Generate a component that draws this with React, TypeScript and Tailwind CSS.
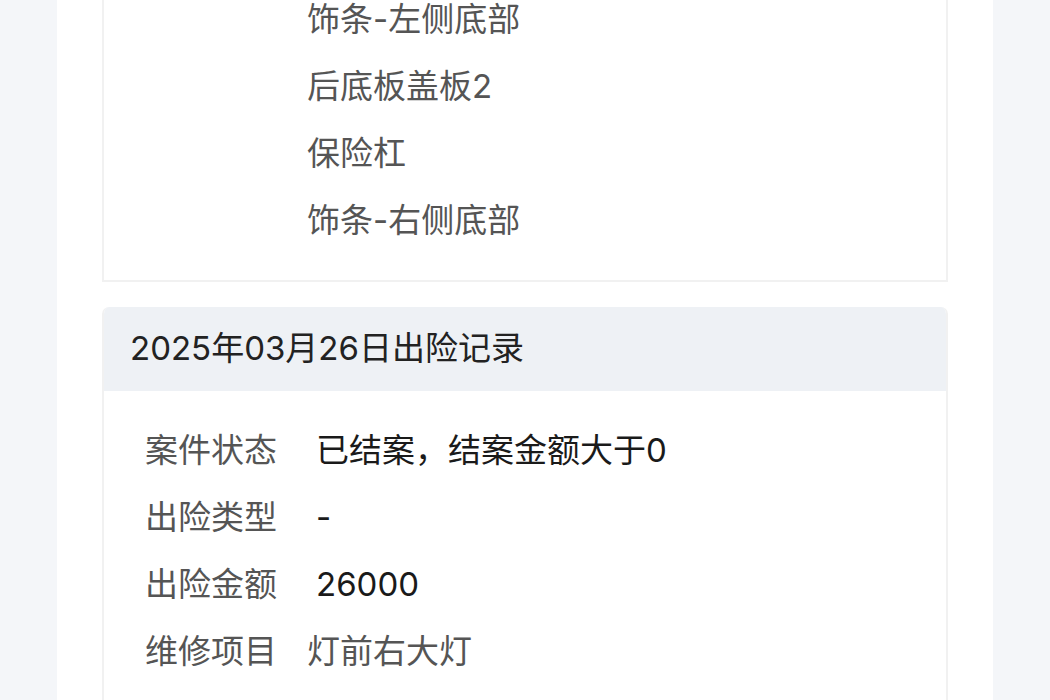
const partItems = ["饰条-左侧底部", "后底板盖板2", "保险杠", "饰条-右侧底部"];

const claimRows = [
  { label: "案件状态", value: "已结案，结案金额大于0" },
  { label: "出险类型", value: "-" },
  { label: "出险金额", value: "26000" },
];

export default function App() {
  return (
    <div
      className="min-h-screen overflow-hidden bg-[#f4f6f9]"
      style={{ fontFamily: 'Inter, "Noto Sans CJK SC", sans-serif' }}
    >
      <div className="mx-[57px] h-[700px] overflow-hidden bg-white px-[45px]">
        <div className="-mt-[14px]">
          {/* previous record, scrolled partly out of view */}
          <section className="border-2 border-t-0 border-[#f1f1f1] pb-[26px]">
            <div className="flex">
              <div className="w-[203px] shrink-0" />
              <ul className="flex flex-col">
                {partItems.map((item) => (
                  <li key={item} className="flex h-[67px] items-center text-[33px] text-[#555]">
                    {item}
                  </li>
                ))}
              </ul>
            </div>
          </section>

          <section className="mt-[25px] overflow-hidden rounded-t-[7px] border-2 border-t-0 border-[#f1f1f1]">
            <header className="-mx-[2px] flex h-[84px] items-center bg-[#eef1f5] px-[28px] text-[33px] text-[#222]">
              2025年03月26日出险记录
            </header>
            <div className="pt-[26px] pb-[80px] pl-[41px]">
              {claimRows.map((row) => (
                <div key={row.label} className="flex h-[67px] items-center text-[33px]">
                  <span className="w-[162px] shrink-0 text-[#555]">{row.label}</span>
                  <span className="pl-[9px] text-[#1a1a1a]">{row.value}</span>
                </div>
              ))}
              <div className="flex text-[33px]">
                <span className="flex h-[67px] w-[162px] shrink-0 items-center text-[#555]">维修项目</span>
                <ul className="flex flex-col">
                  <li className="flex h-[67px] items-center text-[#555]">灯前右大灯</li>
                </ul>
              </div>
            </div>
          </section>
        </div>
      </div>
    </div>
  );
}
